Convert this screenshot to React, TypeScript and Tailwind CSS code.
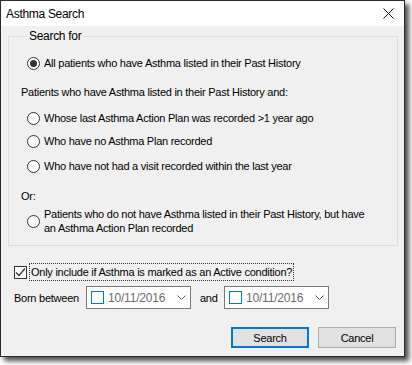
import { useState } from "react";

// Radio button in the classic Windows 10 style
function Radio({ checked }: { checked?: boolean }) {
  return (
    <span className="flex h-[13px] w-[13px] shrink-0 items-center justify-center rounded-full border border-[#333] bg-white">
      {checked && <span className="h-[7px] w-[7px] rounded-full bg-[#333]" />}
    </span>
  );
}

function DatePicker({ value }: { value: string }) {
  return (
    <div className="flex h-[23px] w-[105px] shrink-0 items-center border border-[#7a7a7a] bg-white pl-[4px]">
      <span className="h-[13px] w-[13px] shrink-0 border border-[#0078d7] bg-white" />
      <span className="ml-[4px] text-[12px] tracking-[-0.2px] text-[#6d6d6d]">{value}</span>
      <svg className="ml-auto mr-[4px]" width="9" height="6" viewBox="0 0 9 6">
        <path d="M0.5 0.5 L4.5 4.5 L8.5 0.5" fill="none" stroke="#555" strokeWidth="1" />
      </svg>
    </div>
  );
}

export default function App() {
  const [activeOnly] = useState(true);

  return (
    <div
      className="h-[365px] w-[412px] overflow-hidden whitespace-nowrap bg-white text-[11px] leading-[16px] tracking-[-0.25px] text-black"
      style={{ fontFamily: '"Liberation Sans", Arial, sans-serif' }}
    >
      <div className="flex h-[357px] w-[405px] flex-col border border-[#2a2a2a] bg-[#f0f0f0] shadow-[4px_4px_5px_rgba(0,0,0,0.7)]">
        {/* Title bar */}
        <div className="flex h-[25px] shrink-0 items-center bg-white pl-[5px] pr-[10px]">
          <span className="text-[12px] tracking-[-0.3px]">Asthma Search</span>
          <svg className="ml-auto" width="11" height="11" viewBox="0 0 11 11">
            <path d="M0.5 0.5 L10.5 10.5 M10.5 0.5 L0.5 10.5" stroke="#111" strokeWidth="1" />
          </svg>
        </div>

        {/* Search options group */}
        <fieldset className="ml-[7px] mr-[6px] mt-[2px] border border-[#dcdcdc] px-[12px] pb-[10px]">
          <legend className="ml-[6px] px-[2px] text-[12px] tracking-[-0.3px]">Search for</legend>

          <label className="mt-[11px] flex h-[16px] items-center gap-[4px] pl-[6px]">
            <Radio checked />
            <span>All patients who have Asthma listed in their Past History</span>
          </label>

          <div className="mt-[13px] h-[16px]">Patients who have Asthma listed in their Past History and:</div>

          <label className="mt-[10px] flex h-[16px] items-center gap-[4px] pl-[6px]">
            <Radio />
            <span>Whose last Asthma Action Plan was recorded &gt;1 year ago</span>
          </label>
          <label className="mt-[7px] flex h-[16px] items-center gap-[4px] pl-[6px]">
            <Radio />
            <span>Who have no Asthma Plan recorded</span>
          </label>
          <label className="mt-[9px] flex h-[16px] items-center gap-[4px] pl-[6px]">
            <Radio />
            <span>Who have not had a visit recorded within the last year</span>
          </label>

          <div className="mt-[14px] h-[16px]">Or:</div>

          <label className="mt-[3px] flex items-center gap-[4px] pl-[6px]">
            <Radio />
            <span className="leading-[14px]">
              Patients who do not have Asthma listed in their Past History, but have
              <br />
              an Asthma Action Plan recorded
            </span>
          </label>
        </fieldset>

        {/* Active condition */}
        <label className="ml-[13px] mt-[17px] flex h-[18px] items-center gap-[2px]">
          <span className="flex h-[13px] w-[13px] shrink-0 items-center justify-center border border-[#333] bg-white">
            {activeOnly && (
              <svg width="11" height="11" viewBox="0 0 11 11">
                <path d="M1 5.5 L4 8.5 L10 1.5" fill="none" stroke="#333" strokeWidth="1.2" />
              </svg>
            )}
          </span>
          <span className="border border-dotted border-[#333] px-[1px]">Only include if Asthma is marked as an Active condition?</span>
        </label>

        {/* Date of birth range */}
        <div className="ml-[13px] mt-[5px] flex items-center">
          <span className="w-[72px] shrink-0">Born between</span>
          <DatePicker value="10/11/2016" />
          <span className="ml-[9px] w-[24px] shrink-0">and</span>
          <DatePicker value="10/11/2016" />
        </div>

        {/* Buttons */}
        <div className="mr-[8px] mt-[18px] flex justify-end gap-[9px]">
          <button className="h-[21px] w-[78px] border-2 border-[#0078d7] bg-[#e1e1e1]">Search</button>
          <button className="h-[21px] w-[78px] border border-[#adadad] bg-[#e1e1e1]">Cancel</button>
        </div>
      </div>
    </div>
  );
}
